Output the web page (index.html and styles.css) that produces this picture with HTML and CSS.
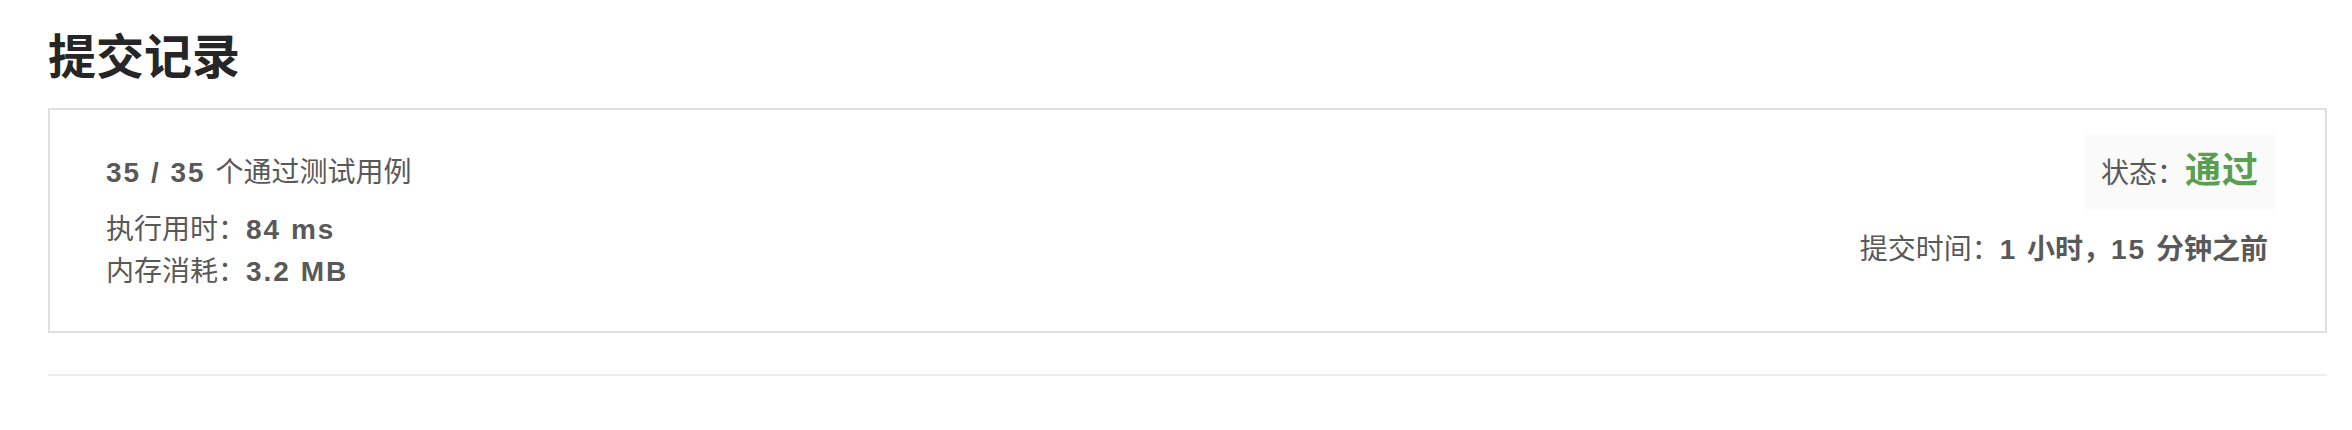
FILE: index.html
```html
<!DOCTYPE html>
<html lang="zh-CN">
<head>
<meta charset="utf-8">
<title>提交记录</title>
<link rel="stylesheet" href="styles.css">
</head>
<body>
<div class="page">
  <h1 class="title">提交记录</h1>
  <div class="card">
    <div class="summary">
      <div class="cases"><b class="num">35 / 35 </b>个通过测试用例</div>
      <div class="stat">执行用时：<b class="num">84 ms</b></div>
      <div class="stat">内存消耗：<b class="num">3.2 MB</b></div>
    </div>
    <div class="result">
      <div class="status"><span class="status-label">状态：</span><span class="status-value">通过</span></div>
      <div class="time">提交时间：<b><span class="num">1 </span>小时，<span class="num">15 </span>分钟之前</b></div>
    </div>
  </div>
  <div class="divider"></div>
</div>
</body>
</html>
```
FILE: styles.css
```css
html, body {
  margin: 0;
  padding: 0;
  background: #ffffff;
}

body {
  font-family: "Liberation Sans", "Noto Sans CJK SC", sans-serif;
  color: #595959;
}

.page {
  padding: 0 25px 0 48px;
}

.title {
  margin: 0;
  padding-top: 28px;
  height: 60px;
  font-size: 48px;
  line-height: 60px;
  font-weight: 700;
  color: #262626;
  margin-bottom: 20px;
}

.card {
  border: 2px solid #e0e0e0;
  display: flex;
  justify-content: space-between;
  align-items: flex-start;
  padding: 24px 50px 24px 56px;
  font-size: 28px;
}

.summary {
  padding: 18px 0 14px;
  line-height: 42px;
}

b {
  font-weight: 700;
}

.num {
  letter-spacing: 2px;
}

.cases {
  margin-bottom: 15px;
}

.result {
  display: flex;
  flex-direction: column;
  align-items: flex-end;
}

.status {
  display: flex;
  align-items: baseline;
  background: #fafafa;
  padding: 16px 16px;
}

.status-label {
  font-size: 28px;
  line-height: 41px;
}

.status-value {
  font-size: 36px;
  line-height: 41px;
  letter-spacing: 1px;
  font-weight: 700;
  color: #5a9e50;
}

.time {
  margin-top: 19px;
  margin-right: 7px;
  line-height: 42px;
}

.divider {
  margin-top: 41px;
  height: 2px;
  background: #eeeeee;
}
```
